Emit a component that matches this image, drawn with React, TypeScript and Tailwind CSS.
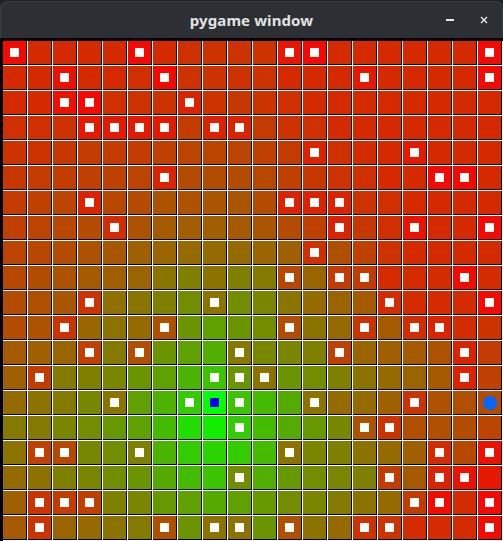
import React from 'react';

// green channel per cell (hex), red = 255 - green
const greens = [
  '08 2a 2a 2a 2a 08 2a 30 33 33 33 14 08 2a 2a 2a 2a 2a 2a 08',
  '2a 2a 11 2a 2a 2f 08 33 33 33 33 2a 2a 2a 19 2a 2a 2a 2a 08',
  '2a 2a 11 08 2f 33 33 22 33 38 33 2f 2a 2a 2a 2a 2a 2a 2a 2a',
  '2f 2f 33 19 19 19 19 3b 22 22 3b 33 2f 2a 2a 2a 2a 2a 2a 2a',
  '33 33 38 3b 3b 3b 40 44 44 44 40 3b 22 2f 2a 2a 19 2a 2a 2a',
  '38 3b 3b 40 40 44 22 4c 4c 4c 47 40 38 33 2f 2a 2a 08 08 2a',
  '3b 40 44 22 47 4c 52 52 55 55 4c 22 22 22 33 2f 2a 2a 2a 2a',
  '40 44 47 4c 2b 52 5a 5f 5f 5a 55 4c 40 22 38 2f 11 2a 2a 08',
  '44 47 4c 52 57 5f 65 6a 6a 6a 65 5f 2f 4f 40 33 2a 2a 2a 2a',
  '47 4d 52 5a 5f 65 75 80 73 80 7a 47 65 3b 3b 2b 2b 2b 0a 2b',
  '4c 50 57 33 70 75 80 8d 73 8d 85 75 6a 65 5a 2b 2b 2b 2b 0a',
  '4c 52 33 66 73 6a 50 95 a1 95 8d 4c 73 6a 33 5a 2b 22 2b 33',
  '5a 5f 65 40 7a 4f 95 a1 af 7a 88 85 80 40 65 5f 5a 52 22 3b',
  '5f 3b 7a 80 85 95 a1 b3 c4 95 73 95 8d 80 73 6a 65 5a 22 40',
  '6a 73 7a 88 73 a1 b3 cc ff c4 bb aa 73 6a 6a 5f 33 52 4f 4c',
  '7a 7a 85 8d 99 a1 bb dd ee cc bb aa 99 88 52 33 4f 4f 4c 44',
  '73 40 47 88 8d 80 b3 cc d4 cc bb 73 85 80 73 6a 5f 2b 47 11',
  '6a 73 80 85 8d 95 aa bb c4 8d af 99 8d 85 80 3b 5a 22 11 19',
  '5f 33 3b 40 80 85 99 a1 aa a1 99 8d 85 7a 73 6a 3b 0a 2b 0a',
  '5a 33 65 6a 73 7a 4f 95 73 73 95 4f 73 6a 33 33 2b 2b 2b 0a',
].map((r) => r.split(' ').map((h) => parseInt(h, 16)));

const walls: number[][] = [
  [0, 5, 11, 12, 19],
  [2, 6, 14, 19],
  [2, 3, 7],
  [3, 4, 5, 6, 8, 9],
  [12, 16],
  [6, 17, 18],
  [3, 11, 12, 13],
  [4, 13, 16, 19],
  [12],
  [11, 13, 14, 18],
  [3, 8, 15, 19],
  [2, 6, 11, 14, 16, 17],
  [3, 5, 9, 13, 18],
  [1, 8, 9, 10, 18],
  [4, 7, 9, 12, 16],
  [9, 14, 15],
  [1, 2, 5, 11, 17, 19],
  [9, 15, 17, 18],
  [1, 2, 3, 16, 17, 19],
  [1, 6, 8, 9, 11, 14, 15, 19],
];

const goal = { r: 14, c: 8 };
const agent = { r: 14, c: 19 };

function Cell({ r, c }: { r: number; c: number }) {
  const g = greens[r][c];
  const isWall = walls[r].includes(c);
  const isGoal = goal.r === r && goal.c === c;
  const isAgent = agent.r === r && agent.c === c;
  return (
    <div
      className="w-[24px] h-[24px] border-r border-b border-black flex items-center justify-center"
      style={{ backgroundColor: `rgb(${255 - g}, ${g}, 0)` }}
    >
      {isWall && <div className="w-[9px] h-[9px] bg-white" />}
      {isGoal && <div className="w-[9px] h-[9px] bg-[#0000ff]" />}
      {isAgent && <div className="w-[14px] h-[14px] rounded-full bg-[#0066ff]" />}
    </div>
  );
}

export default function App() {
  return (
    <div className="w-[503px] h-[541px] bg-[#1e2022] overflow-hidden flex flex-col">
      <div className="relative h-[37px] mt-px shrink-0 bg-[#2c3034] rounded-t-[7px] border-t border-x border-[#3a3e42] flex items-center justify-center">
        <span className="text-[15px] font-bold text-[#e2e2e2] font-['Noto_Sans',sans-serif] tracking-[0.1px]">
          pygame window
        </span>
        <div className="absolute right-[1px] top-0 h-full flex items-center">
          <div className="w-[34px] flex items-center justify-center">
            <div className="w-[8px] h-[2px] bg-[#e8e8e8]" />
          </div>
          <div className="w-[34px] flex items-center justify-center text-[#e8e8e8]">
            <svg width="8" height="8" viewBox="0 0 8 8">
              <path d="M1 1 L7 7 M7 1 L1 7" stroke="currentColor" strokeWidth="1.4" />
            </svg>
          </div>
        </div>
      </div>
      <div className="flex-1 bg-black pl-[3px] pt-[3px]">
        <div className="grid grid-cols-[repeat(20,24px)] gap-px bg-white pr-px pb-px w-max">
          {greens.map((row, r) => row.map((_, c) => <Cell key={`${r}-${c}`} r={r} c={c} />))}
        </div>
      </div>
    </div>
  );
}
